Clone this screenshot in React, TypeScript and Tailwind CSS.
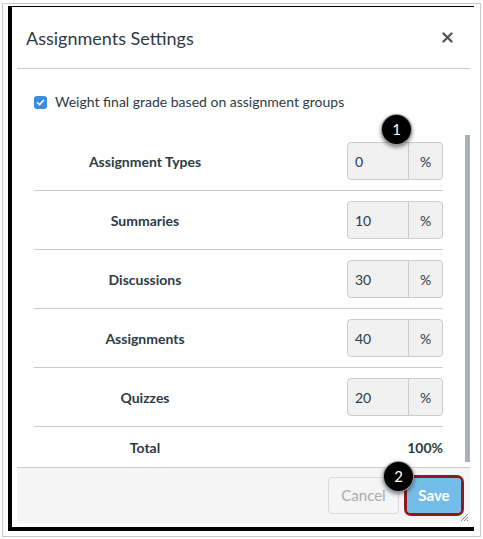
import React from 'react';

const rows = [
  { label: 'Assignment Types', value: '0' },
  { label: 'Summaries', value: '10' },
  { label: 'Discussions', value: '30' },
  { label: 'Assignments', value: '40' },
  { label: 'Quizzes', value: '20' },
];

function Badge({ n }: { n: string }) {
  return (
    <div className="w-[31px] h-[31px] rounded-full bg-black text-white flex items-center justify-center text-[15px] shadow-[0_2px_4px_rgba(0,0,0,0.5)] border border-white/60">
      {n}
    </div>
  );
}

export default function App() {
  return (
    <div
      className="w-[483px] h-[539px] bg-white pl-[2px] pt-[3px] text-[#2d3b45]"
      style={{ fontFamily: 'Lato, "Open Sans", "Liberation Sans", sans-serif' }}
    >
      <div className="w-[479px] h-[534px] border border-[#c8c8c8] pl-[5px] pt-[2px]">
        <div className="w-[466px] h-[525px] border-l-4 border-t border-b-4 border-black flex flex-col pl-[5px] pr-[4px] pb-[5px]">
          <div className="flex-1 flex flex-col bg-white">
            {/* Header */}
            <div className="h-[62px] flex items-center justify-between pl-[9px] pr-[17px] border-b border-[#c7cdd1]">
              <h1 className="text-[18px] leading-none">Assignments Settings</h1>
              <svg width="11" height="11" viewBox="0 0 11 11">
                <path d="M1.5 1.5l8 8M9.5 1.5l-8 8" stroke="#555" strokeWidth="2.4" strokeLinecap="round" />
              </svg>
            </div>

            {/* Body */}
            <div className="flex-1 flex flex-col relative">
              <label className="flex items-center gap-[8px] pl-[17px] pt-[24px] pb-[21px] text-[14px] leading-[18px]">
                <span className="w-[13px] h-[13px] rounded-[3px] bg-[#3a8de0] flex items-center justify-center">
                  <svg width="9" height="9" viewBox="0 0 9 9">
                    <path d="M1.5 4.7l2 2 4-4.4" fill="none" stroke="#fff" strokeWidth="1.6" strokeLinecap="round" strokeLinejoin="round" />
                  </svg>
                </span>
                Weight final grade based on assignment groups
              </label>

              <div className="absolute left-[364px] top-[45px]">
                <Badge n="1" />
              </div>

              <div className="flex-1 flex overflow-hidden">
                <div className="flex-1 pl-[17px] pr-[22px] overflow-hidden">
                  {rows.map((r) => (
                    <div key={r.label} className="h-[59px] flex items-center border-b border-[#c7cdd1]">
                      <div className="w-[222px] text-center font-bold text-[14px]">{r.label}</div>
                      <div className="ml-auto flex h-[38px] w-[96px] rounded-[4px] border border-[#c7cdd1] bg-[#f1f1f1] text-[14px]">
                        <div className="flex-1 flex items-center pl-[7px]">{r.value}</div>
                        <div className="w-[34px] flex items-center justify-center border-l border-[#c7cdd1]">%</div>
                      </div>
                    </div>
                  ))}
                  <div className="h-[40px] flex items-center font-bold text-[14px]">
                    <div className="w-[222px] text-center">Total</div>
                    <div className="ml-auto">100%</div>
                  </div>
                </div>
                <div className="w-[5px] flex flex-col pt-[3px] pb-[5px]">
                  <div className="flex-1 bg-[#a9b0b7]" />
                </div>
              </div>
            </div>

            {/* Footer */}
            <div className="h-[56px] relative bg-[#f5f5f5] border-t border-[#c7cdd1] flex items-center justify-end gap-[5px] pr-[6px]">
              <button className="h-[37px] w-[71px] rounded-[4px] border border-[#d6dadd] bg-[#f5f5f5] text-[#a4acb2] text-[15px]">
                Cancel
              </button>
              <div className="rounded-[7px] border-[3px] border-[#8e1a1f] p-0">
                <button className="h-[35px] w-[54px] rounded-[4px] bg-[#74bde9] text-white font-bold text-[15px]">
                  Save
                </button>
              </div>
              <div className="absolute left-[366px] top-[-7px]">
                <Badge n="2" />
              </div>
              <svg className="absolute right-[1px] bottom-[1px]" width="10" height="10" viewBox="0 0 10 10">
                <path d="M9 2L2 9M9 5L5 9M9 8L8 9" stroke="#888" strokeWidth="1" />
              </svg>
            </div>
          </div>
        </div>
      </div>
    </div>
  );
}
